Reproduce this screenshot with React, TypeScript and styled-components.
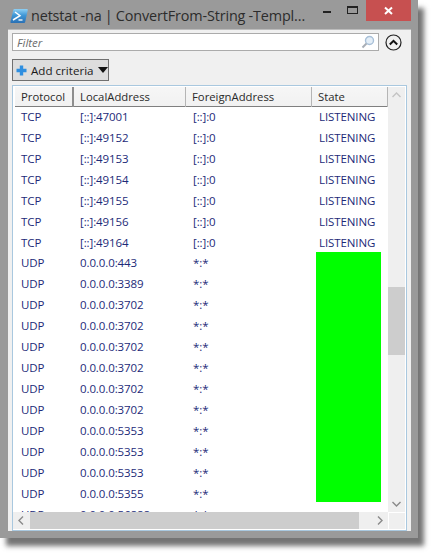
import React from "react";
import styled, { createGlobalStyle } from "styled-components";

const Global = createGlobalStyle`
  html, body { margin: 0; padding: 0; background: #fff; }
  body { font-family: "Open Sans", "Noto Sans", sans-serif; width: 433px; height: 554px; overflow: hidden; }
`;
const Win = styled.div`
  width: 418px; height: 538px; background: #9a9a9a; display: flex; flex-direction: column;
  box-shadow: 6px 8px 5px rgba(70,70,70,.75); box-sizing: border-box; padding: 0 7px 7px 8px;
`;
const TitleBar = styled.div`height: 29px; display: flex; align-items: flex-start; flex: none;`;
const AppIcon = styled.svg`width: 18px; height: 16px; margin: 8px 0 0 2px; flex: none;`;
const TitleText = styled.div`
  margin: 6px 0 0 3px; font-size: 14.4px; line-height: 20px; color: #2c2c2c; white-space: nowrap; flex: none; letter-spacing: -.14px; word-spacing: -.3px;
`;
const Controls = styled.div`margin-left: auto; display: flex; align-items: flex-start;`;
const Ctrl = styled.div`width: 26px; height: 21px; display: flex; align-items: center; justify-content: center;`;
const Close = styled.div`width: 45px; height: 21px; background: #c75050; display: flex; align-items: center; justify-content: center;`;
const Body = styled.div`flex: 1; min-height: 0; background: #f0f0f0; display: flex; flex-direction: column; padding: 3px 3px 0 4px; border-top: 1px solid #bcbcbc;`;
const FilterRow = styled.div`display: flex; align-items: center; height: 18px; flex: none;`;
const FilterBox = styled.div`
  width: 367px; height: 18px; box-sizing: border-box; background: #fff; border: 1px solid #ababab; display: flex; align-items: center; justify-content: space-between; padding: 0 3px 0 4px;
  font-size: 11.5px; font-style: italic; color: #6d6d6d;
`;
const Toggle = styled.svg`width: 17px; height: 17px; margin-left: 6px;`;
const AddBtn = styled.div`
  margin-top: 8px; width: 97px; height: 22px; box-sizing: border-box; flex: none; background: #dddddd; border: 1px solid #707070; display: flex; align-items: center; padding-left: 3px; gap: 4px; font-size: 11.6px; color: #1a1a1a; white-space: nowrap;
`;
const List = styled.div`
  margin-top: 4px; flex: 1; min-height: 0; width: 395px; background: #fff; border: 1px solid #a9c8df; box-sizing: border-box; padding: 1px 1px 1px 0; display: grid; grid-template-columns: 375px 17px; grid-template-rows: 1fr 17px; position: relative;
`;
const Main = styled.div`overflow: hidden; position: relative; padding-left: 2px;`;
const Header = styled.div`display: grid; grid-template-columns: 59px 112px 126px 76px; background: linear-gradient(#f6f6f6,#f1f1f1); border-bottom: 1px solid #7f7f7f; box-sizing: border-box; height: 20px;`;
const HeadCell = styled.div<{ $strong?: boolean }>`
  font-size: 11.3px; line-height: 20px; color: #2a2a2a; padding-left: 6px; box-sizing: border-box; border-right: ${p => (p.$strong ? "2px solid #8e8e8e" : "1px solid #b5b5b5")};
`;
const Row = styled.div`display: grid; grid-template-columns: 59px 113px 126px 75px; height: 20.93px; align-items: start;`;
const Cell = styled.div`font-size: 11.5px; color: #1c2a78; padding-left: 6px; white-space: nowrap; line-height: 19px; letter-spacing: -.1px;`;
const Green = styled.div`position: absolute; left: 303px; top: 165px; width: 65px; height: 250px; background: #00ff00;`;
const VBar = styled.div`background: #efefef; display: flex; flex-direction: column; align-items: center; position: relative;`;
const VThumb = styled.div`position: absolute; top: 200px; left: 0; width: 17px; height: 68px; background: #cdcdcd;`;
const HBar = styled.div`background: #efefef; display: flex; align-items: center; justify-content: space-between;`;
const HThumb = styled.div`flex: 1; height: 17px; background: #cdcdcd;`;
const Arrow = styled.svg`width: 17px; height: 17px; flex: none;`;
const Corner = styled.div`background: #efefef; margin: 1px 0 0 1px;`;

const tcp = ["47001", "49152", "49153", "49154", "49155", "49156", "49164"];
const udp = ["443", "3389", "3702", "3702", "3702", "3702", "3702", "3702", "5353", "5353", "5353", "5355", "56888"];

export default function App() {
  return (
    <>
      <Global />
      <Win>
        <TitleBar>
          <AppIcon viewBox="0 0 18 16">
            <defs>
              <linearGradient id="psBlue" x1="0" y1="0" x2="0" y2="1">
                <stop offset="0" stopColor="#8fd0f4" />
                <stop offset=".45" stopColor="#3f97d6" />
                <stop offset="1" stopColor="#2a70b4" />
              </linearGradient>
            </defs>
            <path d="M4.5 1h12.5q1 0 .8 1l-2.6 12q-.2 1-1.2 1H1.2q-1 0-.8-1l2.9-12q.2-1 1.2-1z" fill="url(#psBlue)" />
            <path d="M5 4l5 3.6-7 4.4" fill="none" stroke="#fff" strokeWidth="1.5" />
            <path d="M8.5 12h4" stroke="#fff" strokeWidth="1.3" />
          </AppIcon>
          <TitleText>netstat -na | ConvertFrom-String -Templ...</TitleText>
          <Controls>
            <Ctrl><svg width="10" height="10"><rect x="1" y="5" width="8" height="2" fill="#222" /></svg></Ctrl>
            <Ctrl><svg width="12" height="10"><rect x=".5" y=".5" width="10" height="7" fill="none" stroke="#222" /><rect x="0" y="0" width="11" height="2" fill="#222" /></svg></Ctrl>
            <Close><svg width="10" height="10" viewBox="0 0 10 10"><path d="M1 1.5l7 6.5M8 1.5l-7 6.5" stroke="#fff" strokeWidth="2" /></svg></Close>
          </Controls>
        </TitleBar>
        <Body>
          <FilterRow>
            <FilterBox>
              Filter
              <svg width="14" height="14" viewBox="0 0 14 14"><circle cx="8.5" cy="5.5" r="4" fill="#e4eef7" stroke="#a9c0d8" strokeWidth="1.4" /><path d="M5.5 8.5L1.5 12.5" stroke="#a8aeb6" strokeWidth="2" /></svg>
            </FilterBox>
            <Toggle viewBox="0 0 17 17"><circle cx="8.5" cy="8.5" r="7.5" fill="none" stroke="#222" strokeWidth="1.2" /><path d="M4.8 10.5l3.7-3.7 3.7 3.7" fill="none" stroke="#111" strokeWidth="2" /></Toggle>
          </FilterRow>
          <AddBtn>
            <svg width="11" height="11" viewBox="0 0 11 11"><path d="M5.5 0.5v10M0.5 5.5h10" stroke="#2f8fe0" strokeWidth="3.4" /></svg>
            Add criteria
            <svg width="10" height="6" viewBox="0 0 10 6"><path d="M0 0h10L5 6z" fill="#111" /></svg>
          </AddBtn>
          <List>
            <Main>
              <Header>
                <HeadCell $strong>Protocol</HeadCell>
                <HeadCell>LocalAddress</HeadCell>
                <HeadCell>ForeignAddress</HeadCell>
                <HeadCell>State</HeadCell>
              </Header>
              {tcp.map((p, i) => (
                <Row key={i}>
                  <Cell>TCP</Cell>
                  <Cell>{`[::]:${p}`}</Cell>
                  <Cell>[::]:0</Cell>
                  <Cell>LISTENING</Cell>
                </Row>
              ))}
              {udp.map((p, i) => (
                <Row key={i}>
                  <Cell>UDP</Cell>
                  <Cell>{`0.0.0.0:${p}`}</Cell>
                  <Cell>*:*</Cell>
                  <Cell />
                </Row>
              ))}
              <Green />
            </Main>
            <VBar>
              <Arrow viewBox="0 0 17 17"><path d="M4.5 10l4-4 4 4" fill="none" stroke="#c4c4c4" strokeWidth="1.4" /></Arrow>
              <VThumb />
              <Arrow viewBox="0 0 17 17" style={{ marginTop: "auto" }}><path d="M4.5 7l4 4 4-4" fill="none" stroke="#8a8a8a" strokeWidth="1.4" /></Arrow>
            </VBar>
            <HBar>
              <Arrow viewBox="0 0 17 17"><path d="M10 4.5l-4 4 4 4" fill="none" stroke="#8a8a8a" strokeWidth="1.4" /></Arrow>
              <HThumb />
              <Arrow viewBox="0 0 17 17" style={{ marginLeft: 12 }}><path d="M7 4.5l4 4-4 4" fill="none" stroke="#8a8a8a" strokeWidth="1.4" /></Arrow>
            </HBar>
            <Corner />
          </List>
        </Body>
      </Win>
    </>
  );
}
